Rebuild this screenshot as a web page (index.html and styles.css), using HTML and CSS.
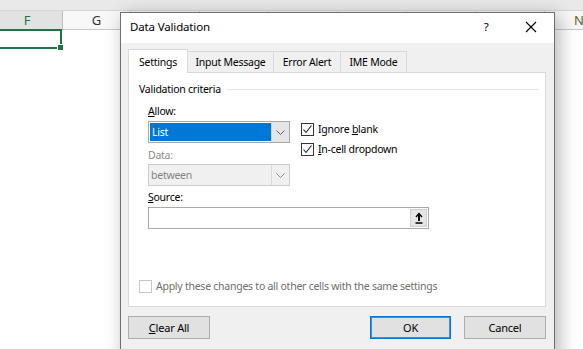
FILE: index.html
```html
<!DOCTYPE html>
<html lang="en">
<head>
  <meta charset="UTF-8" />
  <title>Data Validation</title>
  <link rel="stylesheet" href="styles.css">
</head>
<body>
  <!-- sheet behind the dialog -->
  <div class="sheet">
    <div class="topstrip"></div>
    <div class="headers">
      <div class="colhead first sel">F</div>
      <div class="colhead">G</div>
      <div class="colhead"></div>
      <div class="colhead"></div>
      <div class="colhead"></div>
      <div class="colhead"></div>
      <div class="colhead"></div>
      <div class="colhead"></div>
      <div class="colhead">N</div>
    </div>
    <div class="rows">
      <div class="cell active"><span class="handle"></span></div>
    </div>
  </div>

  <!-- dialog -->
  <div class="dialog">
    <div class="titlebar">
      <span class="title">Data Validation</span>
      <span class="help">?</span>
      <span class="close">
        <svg width="12" height="12" viewBox="0 0 12 12"><path d="M1 1L11 11M11 1L1 11" stroke="#000" stroke-width="1.1" fill="none"/></svg>
      </span>
    </div>

    <div class="dlg-body">
      <div class="tabs">
        <div class="tab active w-settings">Settings</div>
        <div class="tab w-input">Input Message</div>
        <div class="tab w-error">Error Alert</div>
        <div class="tab w-ime">IME Mode</div>
      </div>

      <div class="panel">
        <div class="group-title"><span>Validation criteria</span><span class="rule"></span></div>

        <div class="criteria">
          <div class="field-label"><u>A</u>llow:</div>
          <div class="allow-row">
            <div class="combo">
              <span class="value selected">List</span>
              <span class="arrow">
                <svg width="9" height="5" viewBox="0 0 9 5"><path d="M0.5 0.5L4.5 4.5L8.5 0.5" stroke="#606060" fill="none"/></svg>
              </span>
            </div>
            <div class="checks">
              <div class="check">
                <span class="box"><svg width="11" height="11" viewBox="0 0 11 11"><path d="M1.5 5.5L4 8.5L9.5 1.5" stroke="#222" stroke-width="1.1" fill="none"/></svg></span>
                <span>Ignore <u>b</u>lank</span>
              </div>
              <div class="check">
                <span class="box"><svg width="11" height="11" viewBox="0 0 11 11"><path d="M1.5 5.5L4 8.5L9.5 1.5" stroke="#222" stroke-width="1.1" fill="none"/></svg></span>
                <span><u>I</u>n-cell dropdown</span>
              </div>
            </div>
          </div>

          <div class="field-label disabled lbl-data">Data:</div>
          <div class="combo disabled">
            <span class="value">between</span>
            <span class="arrow">
              <svg width="9" height="5" viewBox="0 0 9 5"><path d="M0.5 0.5L4.5 4.5L8.5 0.5" stroke="#8a8a8a" fill="none"/></svg>
            </span>
          </div>

          <div class="field-label lbl-source"><u>S</u>ource:</div>
          <div class="source">
            <span class="ref-btn">
              <svg width="8" height="12" viewBox="0 0 8 12"><path d="M4 1.5V9" stroke="#000" stroke-width="2" fill="none"/><path d="M1 5L4 1.5L7 5" stroke="#000" stroke-width="1.4" fill="none"/><path d="M0.5 11H7.5" stroke="#000" stroke-width="1.5"/></svg>
            </span>
          </div>
        </div>

        <div class="check disabled apply">
          <span class="box"></span>
          <span>Apply these changes to all other cells with the same settings</span>
        </div>
      </div>

      <div class="buttons">
        <button class="btn"><u>C</u>lear All</button>
        <span class="spacer"></span>
        <button class="btn default">OK</button>
        <button class="btn">Cancel</button>
      </div>
    </div>
  </div>
</body>
</html>
```

FILE: styles.css
```css
body {
  margin: 0;
  width: 583px;
  height: 349px;
  overflow: hidden;
  background: #fff;
  font-family: "Noto Sans", "Open Sans", sans-serif;
  font-size: 10.5px;
  letter-spacing: -0.25px;
  color: #000;
  position: relative;
}

/* sheet */
.sheet {
  overflow: hidden;
}
.topstrip {
  height: 10px;
  background: #e9e9e9;
  border-bottom: 1px solid #d6d6d6;
}
.headers {
  display: flex;
  height: 18px;
  background: #f8f8f8;
  border-bottom: 1px solid #c8c8c8;
}
.colhead {
  flex: 0 0 69px;
  box-sizing: border-box;
  border-right: 1px solid #d4d4d4;
  text-align: center;
  line-height: 18px;
  font-size: 13px;
  letter-spacing: 0;
  color: #333;
}
.colhead.first {
  flex-basis: 71px;
  margin-left: -8px;
}
.colhead.sel {
  background: #e2e2e2;
  color: #217346;
  border-right-color: #bcbcbc;
}
.colhead:nth-child(2) {
  flex-basis: 68px;
}
.colhead:last-child {
  color: #6b5f1e;
}
.rows {
  position: relative;
  height: 320px;
}
.cell.active {
  position: relative;
  width: 66px;
  height: 20px;
  margin-top: -1px;
  margin-left: -4px;
  border: 2px solid #217346;
  box-sizing: border-box;
}
.handle {
  position: absolute;
  right: -4px;
  bottom: -4px;
  width: 5px;
  height: 5px;
  background: #217346;
  border: 1px solid #fff;
}

/* dialog */
.dialog {
  position: absolute;
  left: 120px;
  top: 12px;
  width: 435px;
  height: 345px;
  box-sizing: border-box;
  background: #f0f0f0;
  border: 1px solid #6e6e6e;
  box-shadow: 4px 4px 18px rgba(0, 0, 0, 0.3);
}
.titlebar {
  display: flex;
  align-items: center;
  box-sizing: border-box;
  height: 30px;
  background: #fff;
  padding: 0 0 3px 9px;
}
.title {
  flex: 1;
  font-size: 11.5px;
  letter-spacing: -0.15px;
}
.help {
  width: 12px;
  font-size: 11.5px;
  text-align: center;
  margin-right: 33px;
}
.close {
  display: flex;
  margin-right: 17px;
}
.dlg-body {
  padding: 6px 8px 0 7px;
}

.tabs {
  display: flex;
  align-items: flex-end;
  height: 23px;
}
.tab {
  box-sizing: border-box;
  height: 21px;
  line-height: 20px;
  text-align: center;
  border: 1px solid #d9d9d9;
  border-bottom: none;
  margin-left: -1px;
  background: #f0f0f0;
}
.tab.active {
  line-height: 24px;
  background: #fff;
  margin-left: 0;
  position: relative;
  z-index: 1;
  margin-bottom: -1px;
  height: 24px;
}
.w-settings { width: 60px; }
.w-input { width: 87px; }
.w-error { width: 68px; }
.w-ime { width: 67px; }

.panel {
  display: flex;
  flex-direction: column;
  box-sizing: border-box;
  height: 235px;
  background: #fff;
  border: 1px solid #d9d9d9;
  padding: 8px 7px 10px 10px;
}
.group-title {
  display: flex;
  align-items: center;
  line-height: 16px;
}
.group-title .rule {
  flex: 1;
  margin-left: 6px;
  border-top: 1px solid #e3e3e3;
}
.criteria {
  padding-left: 9px;
}
.field-label {
  line-height: 16px;
  margin-top: 6px;
}
.field-label.disabled {
  color: #8c8c8c;
}
.lbl-data { margin-top: 4px; }
.lbl-source { margin-top: 3px; }

.allow-row {
  display: flex;
  align-items: flex-start;
  height: 22px;
  margin-top: 2px;
}
.combo {
  display: flex;
  box-sizing: border-box;
  width: 142px;
  height: 22px;
  border: 1px solid #a9a9a9;
  background: #fff;
}
.combo .value {
  flex: 1;
  line-height: 18px;
  padding-left: 2px;
}
.combo .value.selected {
  background: #0078d7;
  color: #fff;
  margin: 1px 0 1px 1px;
  line-height: 18px;
}
.combo .arrow {
  display: flex;
  align-items: center;
  justify-content: center;
  width: 17px;
  background: #e5e5e5;
  border-left: 1px solid #d4d4d4;
}
.combo.disabled {
  background: #f0f0f0;
  border-color: #cccccc;
  margin-top: 1px;
  color: #838383;
}
.combo.disabled .value {
  line-height: 20px;
  padding-left: 2px;
}
.combo.disabled .arrow {
  background: #f0f0f0;
  border-left-color: #d9d9d9;
}

.checks {
  margin-left: 11px;
  margin-top: -2px;
}
.check {
  display: flex;
  align-items: center;
  line-height: 20px;
}
.check .box {
  display: flex;
  align-items: center;
  justify-content: center;
  box-sizing: border-box;
  width: 13px;
  height: 13px;
  border: 1px solid #333;
  background: #fff;
  margin-right: 4px;
}
.check.disabled {
  color: #6d6d6d;
}
.check.disabled .box {
  border-color: #c6c6c6;
}
.apply {
  margin-top: auto;
}

.source {
  display: flex;
  justify-content: flex-end;
  align-items: center;
  box-sizing: border-box;
  width: 281px;
  height: 22px;
  margin-top: 2px;
  border: 1px solid #a9a9a9;
  background: #fff;
  padding-right: 1px;
}
.ref-btn {
  display: flex;
  align-items: center;
  justify-content: center;
  width: 17px;
  height: 18px;
  box-sizing: border-box;
  background: #e6e6e6;
  border: 1px solid #cfcfcf;
}

.buttons {
  display: flex;
  margin-top: 9px;
}
.spacer {
  flex: 1;
}
.btn {
  box-sizing: border-box;
  width: 82px;
  height: 23px;
  padding: 0;
  font-family: inherit;
  font-size: 11px;
  letter-spacing: -0.2px;
  color: #000;
  background: #e1e1e1;
  border: 1px solid #adadad;
  margin-left: 13px;
}
.btn:first-child {
  margin-left: 0;
}
.btn.default {
  border: 1px solid #0078d7;
  box-shadow: inset 0 0 0 1px #3c8fd8;
  width: 81px;
}
```
